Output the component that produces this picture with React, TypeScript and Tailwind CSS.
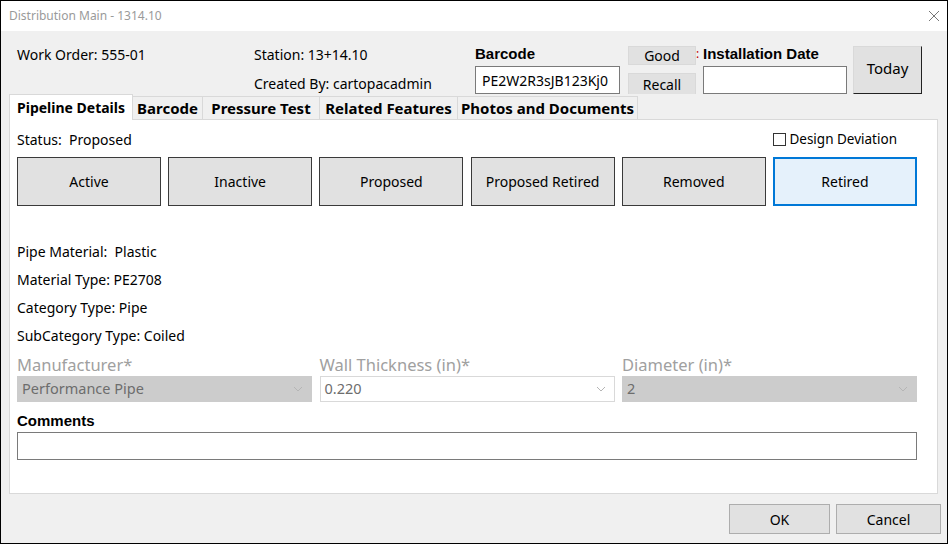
import React from "react";

const F = { fontFamily: '"Noto Sans", "Segoe UI", sans-serif' };
const B = { fontFamily: '"Liberation Sans", Arial, sans-serif' };

function Chevron() {
  return (
    <svg width="10" height="6" viewBox="0 0 10 6" className="shrink-0">
      <path d="M1 1 L5 5 L9 1" fill="none" stroke="#b5b5b5" strokeWidth="1" />
    </svg>
  );
}

function Select({ value, disabled }: { value: string; disabled?: boolean }) {
  return (
    <div
      className={
        "flex h-[26px] w-[295px] items-center justify-between pl-[4px] pr-[8px] text-[14.5px] " +
        (disabled ? "border border-[#cccccc] bg-[#cccccc] text-[#6d6d6d]" : "border border-[#d9d9d9] bg-white text-[#6d6d6d]")
      }
    >
      <span>{value}</span>
      <Chevron />
    </div>
  );
}

export default function App() {
  const statuses = ["Active", "Inactive", "Proposed", "Proposed Retired", "Removed", "Retired"];
  const tabs = [
    { t: "Barcode", w: 70 },
    { t: "Pressure Test", w: 117 },
    { t: "Related Features", w: 138 },
    { t: "Photos and Documents", w: 180 },
  ];
  return (
    <div style={F} className="flex h-[544px] w-[948px] flex-col border border-black bg-[#f0f0f0] text-[14px] text-black">
      {/* title bar */}
      <div className="flex h-[30px] shrink-0 items-center justify-between bg-white pl-[8px] pr-[6px]">
        <span className="text-[12px] text-[#9a9a9a]">Distribution Main - 1314.10</span>
        <svg width="12" height="12" viewBox="0 0 12 12" className="mr-[1px]">
          <path d="M1 1 L11 11 M11 1 L1 11" stroke="#777" strokeWidth="1" />
        </svg>
      </div>

      {/* header */}
      <div className="flex h-[63px] shrink-0 pl-[16px] pt-[13px]">
        <div className="w-[237px]">
          <div className="flex h-[20px] items-center">Work Order: 555-01</div>
        </div>
        <div className="w-[221px]">
          <div className="flex h-[20px] items-center">Station: 13+14.10</div>
          <div className="mt-[9px] flex h-[20px] items-center">Created By: cartopacadmin</div>
        </div>
        <div className="w-[153px]">
          <div style={B} className="flex h-[20px] items-center text-[15px] font-bold">Barcode</div>
          <div className="mt-[2px] flex h-[28px] w-[145px] items-center border border-[#7a7a7a] bg-white pl-[6px] text-[14px]">
            PE2W2R3sJB123Kj0
          </div>
        </div>
        <div className="relative w-[75px]">
          <div className="mt-[2px] flex h-[19px] w-[68px] items-center justify-center border border-[#d9d9d9] bg-[#e1e1e1] text-[14px]">
            Good
          </div>
          <div className="mt-[8px] flex h-[21px] w-[68px] items-start justify-center overflow-hidden border-x border-t border-[#d9d9d9] bg-[#e1e1e1] text-[14px] leading-[22px]">
            Recall
          </div>
          <span className="absolute left-[68px] top-[1px] text-[12px] text-[#c00000]">:</span>
        </div>
        <div className="w-[150px]">
          <div style={B} className="flex h-[20px] items-center text-[15px] font-bold">Installation Date</div>
          <div className="mt-[2px] h-[28px] w-[144px] border border-[#7a7a7a] bg-white" />
        </div>
        <div>
          <div className="mt-[2px] flex h-[48px] w-[69px] items-center justify-center border-l border-t border-[#d9d9d9] border-b-[1.5px] border-r-[1.5px] border-b-[#222] border-r-[#222] bg-[#e1e1e1] pb-[3px] text-[15px]">
            Today
          </div>
        </div>
      </div>

      {/* tabs */}
      <div className="ml-[8px] flex h-[25px] shrink-0 items-end">
        <div className="relative z-10 -mb-[1px] flex h-[26px] w-[124px] items-center justify-center border-x border-t border-[#d9d9d9] bg-white text-[14px] font-bold">
          Pipeline Details
        </div>
        {tabs.map((t) => (
          <div
            key={t.t}
            style={{ width: t.w }}
            className="flex h-[23px] items-center justify-center border-r border-t border-[#d9d9d9] bg-[#f0f0f0] text-[15px] font-bold"
          >
            {t.t}
          </div>
        ))}
      </div>

      {/* panel */}
      <div className="ml-[8px] flex h-[375px] w-[929px] shrink-0 flex-col border border-[#d9d9d9] bg-white pl-[7px] pt-[9px]">
        <div className="flex h-[20px] items-center justify-between pr-[40px]">
          <span>Status:&nbsp; Proposed</span>
          <div className="flex items-center gap-[3px] pt-[1px]">
            <div className="h-[13px] w-[13px] border border-[#333] bg-white" />
            <span className="text-[13.5px]">Design Deviation</span>
          </div>
        </div>
        <div className="mt-[8px] flex gap-[7.2px]">
          {statuses.map((s) => (
            <div
              key={s}
              className={
                "flex h-[49px] w-[144px] items-center justify-center text-[14px] " +
                (s === "Retired"
                  ? "border-2 border-[#0078d7] bg-[#e5f1fb]"
                  : "border border-[#3a3a3a] bg-[#e1e1e1]")
              }
            >
              {s}
            </div>
          ))}
        </div>
        <div className="mt-[31px] flex h-[28px] items-center">Pipe Material:&nbsp; Plastic</div>
        <div className="flex h-[28px] items-center">Material Type: PE2708</div>
        <div className="flex h-[28px] items-center">Category Type: Pipe</div>
        <div className="flex h-[29px] items-center">SubCategory Type: Coiled</div>

        <div className="mt-[5px] flex gap-[7.5px]">
          <div>
            <div className="flex h-[21px] items-center text-[16.5px] text-[#a0a0a0]">Manufacturer*</div>
            <Select value="Performance Pipe" disabled />
          </div>
          <div>
            <div className="flex h-[21px] items-center text-[16.5px] text-[#a0a0a0]">Wall Thickness (in)*</div>
            <Select value="0.220" />
          </div>
          <div>
            <div className="flex h-[21px] items-center text-[16.5px] text-[#a0a0a0]">Diameter (in)*</div>
            <Select value="2" disabled />
          </div>
        </div>

        <div style={B} className="mt-[9px] flex h-[20px] items-center text-[15px] font-bold">Comments</div>
        <div className="mt-[1px] h-[28px] w-[900px] border border-[#7a7a7a] bg-white" />
      </div>

      {/* footer */}
      <div className="mt-[10px] flex justify-end gap-[6px] pr-[6px]">
        <div className="flex h-[30px] w-[101px] items-center justify-center border border-[#adadad] bg-[#e1e1e1] text-[14px]">
          OK
        </div>
        <div className="flex h-[30px] w-[105px] items-center justify-center border border-[#adadad] bg-[#e1e1e1] text-[14px]">
          Cancel
        </div>
      </div>
    </div>
  );
}
